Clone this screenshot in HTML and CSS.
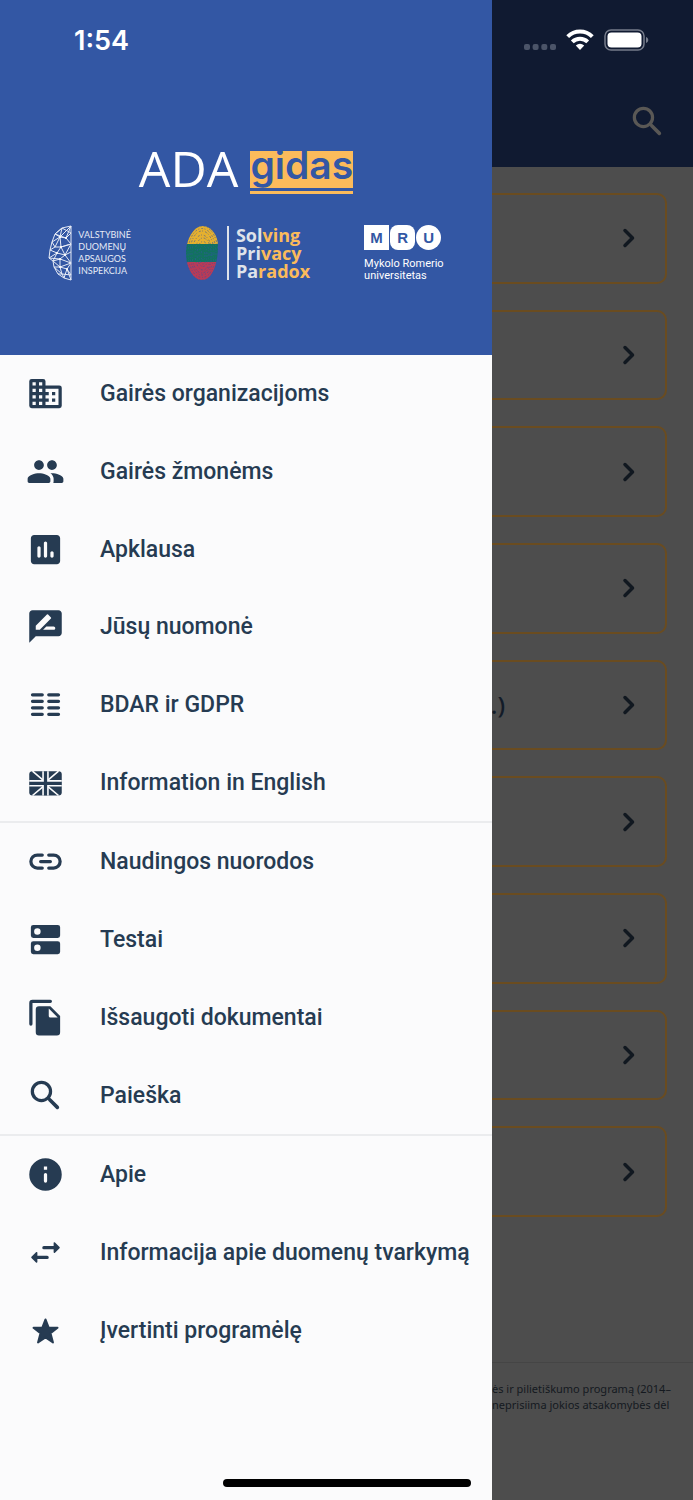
FILE: index.html
```html
<!DOCTYPE html>
<html lang="lt">
<head>
<meta charset="utf-8">
<meta name="viewport" content="width=device-width, initial-scale=1">
<title>ADA gidas</title>
<link rel="stylesheet" href="styles.css">
</head>
<body>
<div class="screen">
  <div class="page">
    <header class="topbar">
      <button class="icon-button" type="button" aria-label="Paieška">
        <svg class="icon" viewBox="0 0 24 24"><g fill="none" stroke="currentColor" stroke-width="2" stroke-linecap="round"><circle cx="9.5" cy="9.5" r="5.6"/><path d="M14.6 14.6l4.7 4.7" stroke-width="2.2"/></g></svg>
      </button>
    </header>
    <main class="cards">
      <a class="card" href="#"><svg class="chevron" viewBox="0 0 24 24"><path d="M8 4.500l7.500 7.500L8 19.500"/></svg></a>
      <a class="card" href="#"><svg class="chevron" viewBox="0 0 24 24"><path d="M8 4.500l7.500 7.500L8 19.500"/></svg></a>
      <a class="card" href="#"><svg class="chevron" viewBox="0 0 24 24"><path d="M8 4.500l7.500 7.500L8 19.500"/></svg></a>
      <a class="card" href="#"><svg class="chevron" viewBox="0 0 24 24"><path d="M8 4.500l7.500 7.500L8 19.500"/></svg></a>
      <a class="card" href="#"><span class="card-title">.)</span><svg class="chevron" viewBox="0 0 24 24"><path d="M8 4.500l7.500 7.500L8 19.500"/></svg></a>
      <a class="card" href="#"><svg class="chevron" viewBox="0 0 24 24"><path d="M8 4.500l7.500 7.500L8 19.500"/></svg></a>
      <a class="card" href="#"><svg class="chevron" viewBox="0 0 24 24"><path d="M8 4.500l7.500 7.500L8 19.500"/></svg></a>
      <a class="card" href="#"><svg class="chevron" viewBox="0 0 24 24"><path d="M8 4.500l7.500 7.500L8 19.500"/></svg></a>
      <a class="card" href="#"><svg class="chevron" viewBox="0 0 24 24"><path d="M8 4.500l7.500 7.500L8 19.500"/></svg></a>
    </main>
    <footer class="notice">ės ir pilietiškumo programą (2014–<br>neprisiima jokios atsakomybės dėl</footer>
  </div>

  <aside class="drawer">
    <div class="brand">
      <h1 class="title">
        <span class="title-ada">ADA</span>
        <span class="title-mark"><span class="title-gidas">gidas</span></span>
      </h1>
      <div class="partners">
        <div class="partner vdai">
          <svg class="vdai-mark" viewBox="0 0 24 56"><path fill="none" stroke="#e6ebf6" stroke-width="1" stroke-linejoin="round" d="M23 1L14 3 7 9 4 17 2 25 1 33 5 36 6 42 10 49 16 53 23 55ZM23 1L12 12 14 3M23 1L18 13 7 9 12 12 4 17M12 12L18 13 23 8M18 13L23 19 13 22 12 12 7 22 4 17M7 22L2 25 9 28 13 22 23 19 17 30 9 28 1 33 12 34 17 30 13 22M7 22L13 22M12 34L5 36 12 42 12 34 23 38 17 30 23 27M12 42L6 42 14 49 12 42 19 44 23 38 12 42M10 49L14 49 16 53 19 44 23 50 14 49M19 44L23 55M7 9L14 3 23 8M9 28L5 36"/><g fill="#fff"><circle cx="12" cy="12" r="1"/><circle cx="18" cy="13" r="1"/><circle cx="13" cy="22" r="1"/><circle cx="9" cy="28" r="1"/><circle cx="17" cy="30" r="1"/><circle cx="12" cy="34" r="1"/><circle cx="12" cy="42" r="1"/><circle cx="19" cy="44" r="1"/></g></svg>
          <span class="vdai-name">VALSTYBINĖ<br>DUOMENŲ<br>APSAUGOS<br>INSPEKCIJA</span>
        </div>
        <div class="partner spp">
          <svg class="print" viewBox="0 0 34 56">
            <defs><clipPath id="finger"><path d="M19 1C27 2 33 11 33 21 33 34 29 55 17 55 7 55 1 41 1 28 1 14 9 0 19 1z"/></clipPath></defs>
            <g clip-path="url(#finger)"><path fill="#e5b02f" d="M0 0h34v19H0z"/><path fill="#12735f" d="M0 19h34v18H0z"/><path fill="#b93b57" d="M0 37h34v19H0z"/>
            <g fill="none" stroke="#3357a4" stroke-width=".8" stroke-opacity=".75" stroke-dasharray="2 1.500 1 2"><ellipse cx="17" cy="28" rx="16" ry="27"/><ellipse cx="17" cy="28" rx="14" ry="24.500"/><ellipse cx="17" cy="28" rx="12" ry="22"/><ellipse cx="17" cy="29" rx="10" ry="19"/><ellipse cx="18" cy="29" rx="8" ry="16"/><ellipse cx="18" cy="29" rx="6" ry="12.500"/><ellipse cx="18" cy="30" rx="4" ry="9"/><ellipse cx="18" cy="30" rx="2" ry="5"/></g></g>
          </svg>
          <span class="spp-name">Sol<b>ving</b><br>Pri<b>vacy</b><br>Pa<b>radox</b></span>
        </div>
        <div class="partner mru">
          <div class="mru-mark"><span class="tile">M</span><span class="tile soft">R</span><span class="tile round">U</span></div>
          <span class="mru-name">Mykolo Romerio<br>universitetas</span>
        </div>
      </div>
    </div>

    <nav class="menu">
      <a class="item" href="#"><svg class="icon" viewBox="0 0 24 24"><path fill-rule="evenodd" d="M12 7V4.500A1.500 1.500 0 0 0 10.500 3h-7A1.500 1.500 0 0 0 2 4.500v15A1.500 1.500 0 0 0 3.500 21h17a1.500 1.500 0 0 0 1.500-1.500v-11A1.500 1.500 0 0 0 20.500 7H12zM6 19H4v-2h2v2zm0-4H4v-2h2v2zm0-4H4V9h2v2zm0-4H4V5h2v2zm4 12H8v-2h2v2zm0-4H8v-2h2v2zm0-4H8V9h2v2zm0-4H8V5h2v2zm10 12h-8v-2h2v-2h-2v-2h2v-2h-2V9h8v10zM18 11h-2v2h2v-2zm0 4h-2v2h2v-2z"/></svg>Gairės organizacijoms</a>
      <a class="item" href="#"><svg class="icon" viewBox="0 0 24 24"><path d="M16 11c1.660 0 2.990-1.340 2.990-3S17.660 5 16 5s-3 1.340-3 3 1.340 3 3 3zm-8 0c1.660 0 2.990-1.340 2.990-3S9.660 5 8 5 5 6.340 5 8s1.340 3 3 3zm0 2c-2.330 0-7 1.170-7 3.500V18c0 .55.45 1 1 1h12c.55 0 1-.45 1-1v-1.500c0-2.330-4.670-3.500-7-3.500zm8 0c-.29 0-.62.02-.97.05 1.160.84 1.970 1.970 1.970 3.450V18c0 .35-.07.69-.18 1H22c.55 0 1-.45 1-1v-1.500c0-2.330-4.670-3.500-7-3.500z"/></svg>Gairės žmonėms</a>
      <a class="item" href="#"><svg class="icon" viewBox="0 0 24 24"><path d="M19 3H5c-1.100 0-2 .9-2 2v14c0 1.100.9 2 2 2h14c1.100 0 2-.9 2-2V5c0-1.100-.9-2-2-2zM8 17c-.55 0-1-.45-1-1v-5c0-.55.45-1 1-1s1 .45 1 1v5c0 .55-.45 1-1 1zm4 0c-.55 0-1-.45-1-1V8c0-.55.45-1 1-1s1 .45 1 1v8c0 .55-.45 1-1 1zm4 0c-.55 0-1-.45-1-1v-2c0-.55.45-1 1-1s1 .45 1 1v2c0 .55-.45 1-1 1z"/></svg>Apklausa</a>
      <a class="item" href="#"><svg class="icon" viewBox="0 0 24 24"><path fill-rule="evenodd" d="M20 2H4c-1.100 0-2 .9-2 2v18l4-4h14c1.100 0 2-.9 2-2V4c0-1.100-.9-2-2-2zM6 14v-2.470l6.880-6.880a.5.5 0 0 1 .71 0l1.770 1.770a.5.5 0 0 1 0 .71L8.470 14H6zm11 0h-6.500l2-2H17c.55 0 1 .45 1 1s-.45 1-1 1z"/></svg>Jūsų nuomonė</a>
      <a class="item" href="#"><svg class="icon" viewBox="0 0 24 24"><path fill="none" stroke="currentColor" stroke-width="2" stroke-linecap="round" d="M4 6h6M14 6h6M4 10h6M14 10h6M4 14h6M14 14h6M4 18h6M14 18h6"/></svg>BDAR ir GDPR</a>
      <a class="item" href="#"><svg class="icon" viewBox="0 0 24 24"><rect x="2" y="5" width="20" height="15" rx="2"/><g fill="none" stroke="#fbfbfc"><path stroke-width="1" d="M4 5l6.500 5.500M20 5l-6.500 5.500M4 20l6.500-5.500M20 20l-6.500-5.500"/><path stroke-width="4" d="M12 5v15M2 12.500h20"/></g><path fill="none" stroke="currentColor" stroke-width="2" d="M12 5v15M2 12.500h20"/></svg>Information in English</a>
      <a class="item divided" href="#"><svg class="icon" viewBox="0 0 24 24"><path fill="none" stroke="currentColor" stroke-width="2" stroke-linecap="round" d="M10 8H7a4 4 0 0 0 0 8h3M14 8h3a4 4 0 0 1 0 8h-3M9 12h6"/></svg>Naudingos nuorodos</a>
      <a class="item" href="#"><svg class="icon" viewBox="0 0 24 24"><path fill-rule="evenodd" d="M4.500 3h15A1.500 1.500 0 0 1 21 4.500v5a1.500 1.500 0 0 1-1.500 1.500h-15A1.500 1.500 0 0 1 3 9.500v-5A1.500 1.500 0 0 1 4.500 3zM7 5a2 2 0 1 0 0 4 2 2 0 0 0 0-4zM4.500 13h15a1.500 1.500 0 0 1 1.500 1.500v5a1.500 1.500 0 0 1-1.500 1.500h-15A1.500 1.500 0 0 1 3 19.500v-5A1.500 1.500 0 0 1 4.500 13zM7 15a2 2 0 1 0 0 4 2 2 0 0 0 0-4z"/></svg>Testai</a>
      <a class="item" href="#"><svg class="icon" viewBox="0 0 24 24"><path fill="none" stroke="currentColor" stroke-width="2" stroke-linecap="round" d="M15 2H4a1 1 0 0 0-1 1v13"/><path fill-rule="evenodd" d="M8 5h7l6 6v10a2 2 0 0 1-2 2H8a2 2 0 0 1-2-2V7a2 2 0 0 1 2-2zM14 6.500V11a1 1 0 0 0 1 1h4.500z"/></svg>Išsaugoti dokumentai</a>
      <a class="item" href="#"><svg class="icon" viewBox="0 0 24 24"><g fill="none" stroke="currentColor" stroke-width="2" stroke-linecap="round"><circle cx="9.500" cy="9.500" r="5.600"/><path d="M14.600 14.600l4.700 4.700" stroke-width="2.200"/></g></svg>Paieška</a>
      <a class="item divided" href="#"><svg class="icon" viewBox="0 0 24 24"><path fill-rule="evenodd" d="M12 2a10 10 0 1 0 0 20 10 10 0 0 0 0-20zM11 7h2v2h-2zM12 11a1 1 0 0 1 1 1v4a1 1 0 0 1-2 0v-4a1 1 0 0 1 1-1z"/></svg>Apie</a>
      <a class="item" href="#"><svg class="icon" viewBox="0 0 24 24"><path fill="none" stroke="currentColor" stroke-width="2" stroke-linecap="round" d="M11 9h7M13 15H6"/><path d="M17 6.210v5.580c0 .45.54.67.85.35l2.790-2.790a.5.5 0 0 0 0-.7l-2.790-2.790a.5.5 0 0 0-.85.350zM7 12.210v5.580c0 .45-.54.67-.85.35l-2.790-2.790a.5.5 0 0 1 0-.7l2.790-2.790a.5.5 0 0 1 .85.350z"/></svg>Informacija apie duomenų tvarkymą</a>
      <a class="item" href="#"><svg class="icon" viewBox="0 0 24 24"><path stroke="currentColor" stroke-width="1.200" stroke-linejoin="round" d="M12 5.200l1.900 4.900 5.500.2-4.300 3.400 1.500 5.700-4.600-3.100-4.600 3.100 1.500-5.700-4.300-3.400 5.500-.2z"/></svg>Įvertinti programėlę</a>
    </nav>
  </aside>

  <div class="status">
    <time class="clock">1:54</time>
    <div class="signals">
      <svg width="32" height="8" viewBox="0 0 32 8" fill="#4b5468"><rect y="1" width="6" height="6" rx="2"/><rect x="8.600" y="1" width="6" height="6" rx="2"/><rect x="17.300" y="1" width="6" height="6" rx="2"/><rect x="26" y="1" width="6" height="6" rx="2"/></svg>
      <svg width="28" height="22" viewBox="0 0 28 22"><g fill="none" stroke="#fff" stroke-width="4"><path d="M1.700 7.600a17.500 17.500 0 0 1 24.600 0"/><path d="M6.300 12.900a11 11 0 0 1 15.400 0"/></g><path fill="#fff" d="M14 21l-4.200-4.500a6.500 6.500 0 0 1 8.400 0z"/></svg>
      <svg width="46" height="22" viewBox="0 0 46 22"><rect x="1" y="1" width="39" height="20" rx="6" fill="none" stroke="#767c8b" stroke-width="1.500"/><rect x="3.500" y="3.500" width="34" height="15" rx="4" fill="#fff"/><path fill="#767c8b" d="M42 8c3 1 3 5 0 6z"/></svg>
    </div>
  </div>
  <div class="home-bar"></div>
</div>
</body>
</html>
```
FILE: styles.css
```css
* {
  box-sizing: border-box;
}

body {
  margin: 0;
  font-family: Roboto, "Noto Sans", sans-serif;
}

a {
  color: inherit;
  text-decoration: none;
}

.screen {
  position: relative;
  min-height: 100vh;
  overflow: hidden;
}

.page {
  display: flex;
  flex-direction: column;
  min-height: 100vh;
  background: #4d4d4d;
}

.topbar {
  display: flex;
  justify-content: flex-end;
  align-items: flex-end;
  height: 167px;
  padding: 26px;
  background: #101a31;
}

.icon-button {
  display: flex;
  padding: 0;
  border: 0;
  background: none;
  color: #5a5855;
}

.icon {
  flex: none;
  width: 39px;
  height: 39px;
  fill: currentColor;
}

.cards {
  flex: 1;
  display: grid;
  grid-auto-rows: 1fr;
  gap: 26px;
  padding: 26px 26px 145px;
}

.card {
  display: flex;
  justify-content: flex-end;
  align-items: center;
  gap: 112px;
  padding: 0 24px;
  border: 2px solid #6a4c20;
  border-radius: 10px;
  color: #121b28;
}

.card-title {
  font: 600 24px "Open Sans", sans-serif;
}

.chevron {
  width: 24px;
  height: 24px;
  fill: none;
  stroke: #111820;
  stroke-width: 3.5;
  stroke-linecap: round;
  stroke-linejoin: round;
}

.notice {
  height: 138px;
  padding: 18px 0 0 71%;
  border-top: 1px solid #454545;
  color: #14191f;
  font: 11px/16px "Noto Sans", sans-serif;
  white-space: nowrap;
}

.drawer {
  position: absolute;
  top: 0;
  bottom: 0;
  left: 0;
  display: flex;
  flex-direction: column;
  width: 71%;
  padding-bottom: 131px;
  background: #fbfbfc;
  color: #263b52;
}

.brand {
  display: flex;
  flex-direction: column;
  align-items: center;
  gap: 30px;
  height: 355px;
  padding-top: 151px;
  background: #3357a4;
  color: #fff;
}

.title {
  display: flex;
  gap: 12px;
  margin: 0;
}

.title-ada {
  font: 400 50px/34px "Open Sans", sans-serif;
}

.title-mark {
  padding-bottom: 3px;
  border-bottom: 3px solid #fbbb5b;
}

.title-gidas {
  display: block;
  height: 37px;
  overflow: hidden;
  background: #fbbb5b;
  color: #3357a4;
  font: 600 39px/28px Inter, sans-serif;
}

.partners {
  display: flex;
  gap: 54px;
}

.partner {
  display: flex;
}

.vdai {
  align-items: center;
  gap: 6px;
}

.vdai-mark {
  width: 24px;
  height: 56px;
}

.vdai-name {
  color: #e6ebf6;
  font: 9px/12px Lato, sans-serif;
}

.spp {
  align-items: center;
  gap: 8px;
}

.print {
  width: 34px;
  height: 56px;
}

.spp-name {
  padding-left: 7px;
  border-left: 2px solid #dfe3ea;
  color: #dfe3ea;
  font: 700 18px/18px "Open Sans", sans-serif;
}

.spp-name b {
  color: #fbbb5b;
  font-weight: 700;
}

.mru {
  flex-direction: column;
  gap: 8px;
  padding-top: 1px;
}

.mru-mark {
  display: flex;
  gap: 1px;
}

.tile {
  width: 25px;
  height: 25px;
  background: #fff;
  color: #3357a4;
  font: bold 15px/25px "Liberation Sans", sans-serif;
  text-align: center;
}

.soft {
  border-radius: 8px;
}

.round {
  border-radius: 50%;
}

.mru-name {
  font: 11px/12px Roboto, sans-serif;
}

.menu {
  flex: 1;
  display: flex;
  flex-direction: column;
}

.item {
  flex: 1;
  display: flex;
  align-items: center;
  gap: 35px;
  padding-left: 26px;
  font-size: 23px;
  font-weight: 500;
  white-space: nowrap;
}

.divided {
  border-top: 2px solid #ebecee;
}

.status {
  position: absolute;
  top: 0;
  left: 0;
  right: 0;
  display: flex;
  justify-content: space-between;
  align-items: center;
  height: 80px;
  padding: 0 43px 0 74px;
  color: #fff;
}

.clock {
  font: 600 27px Inter, sans-serif;
}

.signals {
  display: flex;
  align-items: flex-end;
  gap: 10px;
}

.home-bar {
  position: absolute;
  bottom: 13px;
  left: 50%;
  width: 248px;
  height: 8px;
  margin-left: -124px;
  border-radius: 4px;
  background: #000;
}
```
